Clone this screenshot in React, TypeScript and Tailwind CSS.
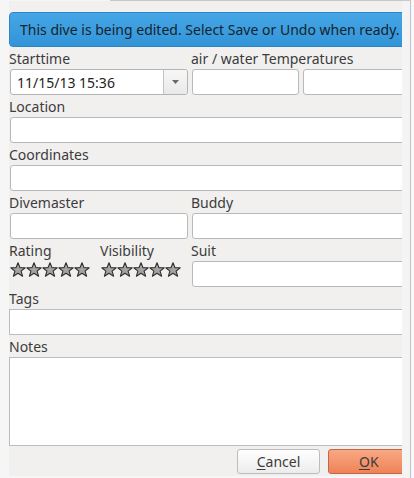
import React from "react";

const font = { fontFamily: '"Noto Sans", "DejaVu Sans", sans-serif' };

const Label = ({ children, className = "" }: { children: React.ReactNode; className?: string }) => (
  <div className={`h-[22px] flex items-end pb-[1px] text-[14px] leading-[18px] text-[#3c3c3c] ${className}`}>
    {children}
  </div>
);

const Field = ({ className = "" }: { className?: string }) => (
  <div className={`h-[26px] bg-white border border-[#b9b9b9] rounded-[3px] ${className}`} />
);

const Star = () => (
  <svg width="16" height="15" viewBox="0 0 16 15">
    <polygon
      points="8,0.8 10,5.6 15.2,5.8 11.1,9.1 12.6,14.2 8,11.3 3.4,14.2 4.9,9.1 0.8,5.8 6,5.6"
      fill="#a3a3a3"
      stroke="#2e2e2e"
      strokeWidth="1.1"
      strokeLinejoin="round"
    />
  </svg>
);

const Stars = ({ className = "" }: { className?: string }) => (
  <div className={`flex h-[26px] items-start pt-[1px] ${className}`}>
    {[0, 1, 2, 3, 4].map((i) => (
      <Star key={i} />
    ))}
  </div>
);

export default function App() {
  return (
    <div className="w-[414px] h-[478px] bg-[#f6f6f6] flex flex-col overflow-hidden" style={font}>
      <div className="h-[1px] ml-[110px] w-[301px] bg-[#c8c8c8] shrink-0" />
      <div className="flex flex-1">
        <div className="w-[9px] shrink-0" />
        <div className="w-[393px] h-[475px] shrink-0 bg-[#f1f0ef] overflow-hidden">
          <div className="w-[440px] pt-[11px]">
            <div className="h-[35px] rounded-l-[4px] border border-[#2f86c6] bg-gradient-to-b from-[#45a6e6] to-[#3295d8] flex items-center pl-[10px] text-[14px] text-[#17232c]">
              This dive is being edited. Select Save or Undo when ready.
            </div>

            <div className="flex">
              <div className="w-[182px] shrink-0">
                <Label>Starttime</Label>
                <div className="ml-[1px] w-[178px] h-[26px] bg-white border border-[#b4b4b4] rounded-[3px] flex">
                  <div className="flex-1 flex items-center pl-[6px] text-[14px] text-[#222]">11/15/13 15:36</div>
                  <div className="w-[24px] border-l border-[#c4c4c4] bg-gradient-to-b from-[#f7f7f7] to-[#e9e9e9] rounded-r-[3px] flex items-center justify-center">
                    <svg width="7" height="4" viewBox="0 0 7 4">
                      <polygon points="0,0 7,0 3.5,4" fill="#6a6a6a" />
                    </svg>
                  </div>
                </div>
              </div>
              <div className="flex-1">
                <Label>air / water Temperatures</Label>
                <div className="flex gap-[4px] ml-[1px]">
                  <Field className="w-[107px]" />
                  <Field className="w-[140px]" />
                </div>
              </div>
            </div>

            <Label>Location</Label>
            <Field className="ml-[1px]" />

            <Label>Coordinates</Label>
            <Field className="ml-[1px]" />

            <div className="flex">
              <div className="w-[182px] shrink-0">
                <Label>Divemaster</Label>
                <Field className="ml-[1px] w-[178px]" />
              </div>
              <div className="flex-1">
                <Label>Buddy</Label>
                <Field className="ml-[1px]" />
              </div>
            </div>

            <div className="flex">
              <div className="w-[91px] shrink-0">
                <Label>Rating</Label>
                <Stars className="ml-[1px]" />
              </div>
              <div className="w-[91px] shrink-0">
                <Label>Visibility</Label>
                <Stars className="ml-[1px]" />
              </div>
              <div className="flex-1">
                <Label>Suit</Label>
                <Field className="ml-[1px]" />
              </div>
            </div>

            <Label>Tags</Label>
            <div className="h-[26px] bg-white border border-[#bdbdbd]" />

            <Label>Notes</Label>
            <div className="h-[89px] bg-white border border-[#bdbdbd]" />

            <div className="flex gap-[8px] pl-[228px] pt-[3px]">
              <button className="w-[83px] h-[25px] rounded-[3px] border border-[#bcbcbc] bg-gradient-to-b from-[#ffffff] to-[#ececec] text-[14px] text-[#3c3c3c]">
                <span className="underline underline-offset-2">C</span>ancel
              </button>
              <button className="w-[100px] h-[25px] rounded-[3px] border border-[#c46644] bg-gradient-to-b from-[#f8a884] to-[#ef8257] text-[14px] text-[#3c3c3c] text-left pl-[30px]">
                <span className="underline underline-offset-2">O</span>K
              </button>
            </div>
          </div>
        </div>
        <div className="w-[8px] h-full shrink-0 bg-[#f4f4f4]" />
        <div className="w-[1px] h-full shrink-0 bg-[#c2c2c2]" />
        <div className="flex-1 h-full bg-[#f8f8f8]" />
      </div>
    </div>
  );
}
